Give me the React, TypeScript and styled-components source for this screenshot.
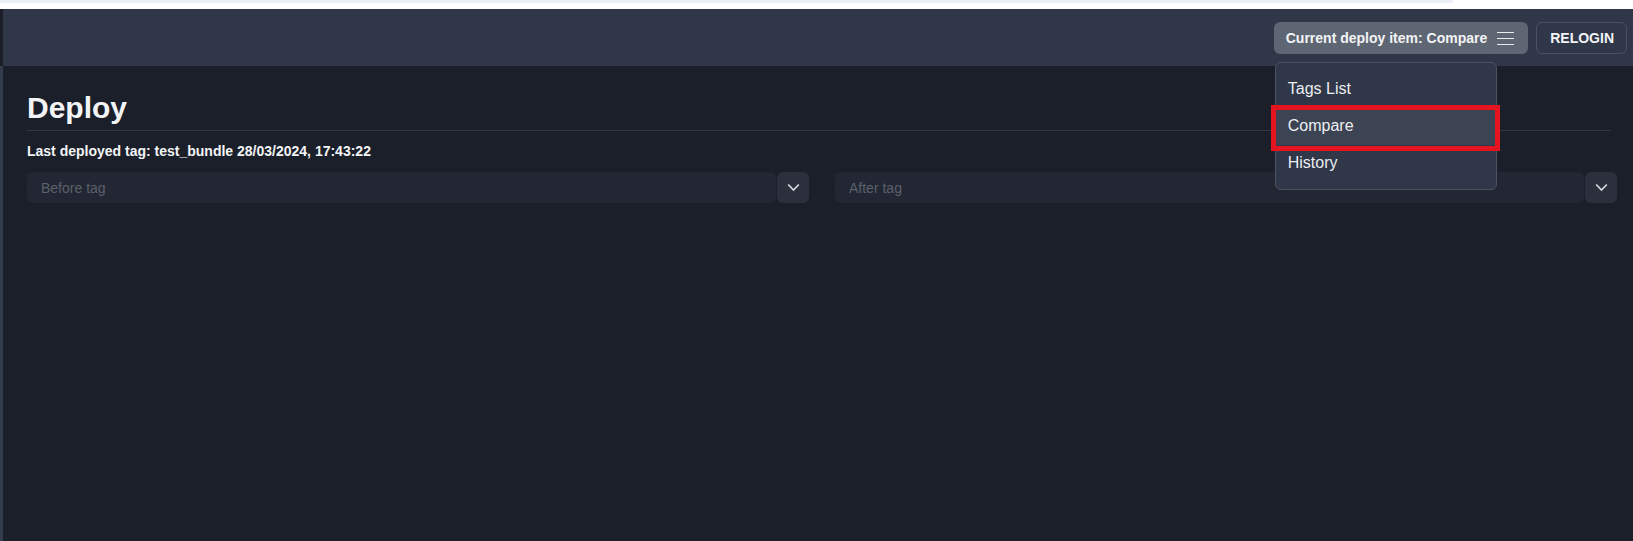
import React from "react";
import styled, { createGlobalStyle } from "styled-components";

const GlobalStyle = createGlobalStyle`
  html, body {
    margin: 0;
    padding: 0;
    background: #ffffff;
    font-family: "Liberation Sans", Arial, sans-serif;
    overflow: hidden;
  }
  * { box-sizing: border-box; }
`;

const Page = styled.div`
  width: 1633px;
  height: 541px;
  display: flex;
  flex-direction: column;
`;

const BrowserStrip = styled.div`
  height: 9px;
  background: #ffffff;
  flex: none;
`;

const BrowserTab = styled.div`
  width: 1453px;
  height: 3px;
  background: #eceef8;
  border-bottom-right-radius: 4px;
`;

const Shell = styled.div`
  flex: 1;
  display: flex;
  min-height: 0;
`;

const SideEdge = styled.div`
  width: 3px;
  flex: none;
  display: flex;
  flex-direction: column;
`;

const SideEdgePart = styled.div<{ $tone: "dark" | "light" }>`
  height: ${(p) => (p.$tone === "dark" ? "57px" : "auto")};
  flex: ${(p) => (p.$tone === "dark" ? "none" : "1")};
  background: ${(p) => (p.$tone === "dark" ? "#1b1e26" : "#333c4c")};
`;

const Main = styled.div`
  flex: 1;
  display: flex;
  flex-direction: column;
  background: #1b1f2a;
  min-width: 0;
`;

const Header = styled.header`
  height: 57px;
  flex: none;
  background: #2f3748;
  display: flex;
  align-items: center;
  justify-content: flex-end;
  gap: 8px;
  padding-right: 6px;
`;

const MenuAnchor = styled.div`
  position: relative;
`;

const MenuButton = styled.button`
  height: 32px;
  display: flex;
  align-items: center;
  gap: 9px;
  padding: 0 13px 0 12px;
  border: none;
  border-radius: 6px;
  background: #5f6673;
  color: #f3f4f6;
  font-family: "Liberation Sans", Arial, sans-serif;
  font-weight: 700;
  font-size: 14px;
  cursor: pointer;
`;

const OutlineButton = styled.button`
  height: 32px;
  padding: 0 12px 0 13px;
  border: 1px solid #4a5262;
  border-radius: 6px;
  background: transparent;
  color: #f3f4f6;
  font-family: "Liberation Sans", Arial, sans-serif;
  font-weight: 700;
  font-size: 14px;
  cursor: pointer;
`;

const Dropdown = styled.div`
  position: absolute;
  top: 40px;
  left: 1px;
  width: 222px;
  padding: 8px 0 7px;
  background: #2f3748;
  border: 1px solid #4b5263;
  border-radius: 6px;
  z-index: 10;
`;

const DropdownItem = styled.div<{ $active?: boolean }>`
  position: relative;
  height: 37px;
  display: flex;
  align-items: center;
  padding: 0 12px;
  font-size: 16px;
  color: #eceef2;
  background: ${(p) => (p.$active ? "#3c4353" : "transparent")};
`;

const Annotation = styled.div`
  position: absolute;
  top: -3px;
  bottom: -6px;
  left: -5px;
  right: -4px;
  border: 5px solid #e5141e;
  pointer-events: none;
`;

const Content = styled.main`
  flex: 1;
  padding: 24px 16px 0 24px;
  display: flex;
  flex-direction: column;
`;

const Title = styled.h1`
  margin: 0;
  font-size: 30px;
  line-height: 36px;
  font-weight: 700;
  color: #f3f4f6;
`;

const Divider = styled.hr`
  margin: 4px 6px 0 0;
  border: none;
  border-top: 1px solid #323946;
  height: 0;
`;

const Meta = styled.div`
  margin-top: 12px;
  font-size: 14px;
  line-height: 16px;
  font-weight: 700;
  color: #f3f4f6;
`;

const SelectRow = styled.div`
  margin-top: 13px;
  display: grid;
  grid-template-columns: 1fr 1fr;
  gap: 26px;
`;

const SelectGroup = styled.div`
  display: flex;
  gap: 1px;
  height: 31px;
`;

const SelectInput = styled.input`
  flex: 1;
  min-width: 0;
  height: 31px;
  border: none;
  outline: none;
  border-radius: 6px;
  background: #232733;
  padding: 0 14px;
  font-family: "Liberation Sans", Arial, sans-serif;
  font-size: 14px;
  color: #e5e7eb;
  &::placeholder {
    color: #5b606b;
  }
`;

const SelectToggle = styled.button`
  width: 32px;
  height: 31px;
  flex: none;
  border: none;
  border-radius: 6px;
  background: #2c2f3c;
  display: flex;
  align-items: center;
  justify-content: center;
  padding: 0;
  cursor: pointer;
`;

const Hamburger = () => (
  <svg width="19" height="14" viewBox="0 0 19 14" fill="none">
    <path d="M1 1.5H18M1 7.5H18M1 13.5H18" stroke="#e8eaee" strokeWidth="1.2" />
  </svg>
);

const Chevron = () => (
  <svg width="13" height="9" viewBox="0 0 13 9" fill="none">
    <path d="M1.2 1.5L6.5 7L11.8 1.5" stroke="#d7dae0" strokeWidth="1.7" />
  </svg>
);

const TagSelect = ({ placeholder }: { placeholder: string }) => (
  <SelectGroup>
    <SelectInput placeholder={placeholder} readOnly />
    <SelectToggle aria-label="open">
      <Chevron />
    </SelectToggle>
  </SelectGroup>
);

export default function App() {
  const items = ["Tags List", "Compare", "History"];
  return (
    <>
      <GlobalStyle />
      <Page>
        <BrowserStrip>
          <BrowserTab />
        </BrowserStrip>
        <Shell>
          <SideEdge>
            <SideEdgePart $tone="dark" />
            <SideEdgePart $tone="light" />
          </SideEdge>
          <Main>
            <Header>
              <MenuAnchor>
                <MenuButton>
                  Current deploy item: Compare
                  <Hamburger />
                </MenuButton>
                <Dropdown>
                  {items.map((it) => (
                    <DropdownItem key={it} $active={it === "Compare"}>
                      {it}
                      {it === "Compare" && <Annotation />}
                    </DropdownItem>
                  ))}
                </Dropdown>
              </MenuAnchor>
              <OutlineButton>RELOGIN</OutlineButton>
            </Header>
            <Content>
              <Title>Deploy</Title>
              <Divider />
              <Meta>Last deployed tag: test_bundle 28/03/2024, 17:43:22</Meta>
              <SelectRow>
                <TagSelect placeholder="Before tag" />
                <TagSelect placeholder="After tag" />
              </SelectRow>
            </Content>
          </Main>
        </Shell>
      </Page>
    </>
  );
}
